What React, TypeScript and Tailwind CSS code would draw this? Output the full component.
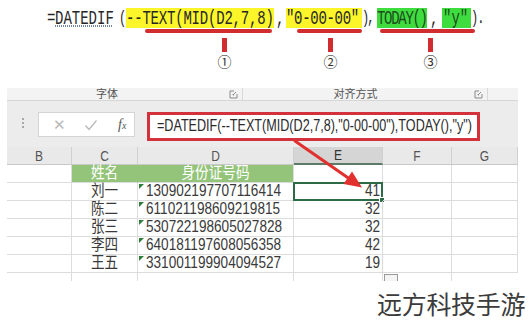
import React from "react";

type Person = { name: string; id: string; age: number };

const people: Person[] = [
  { name: "刘一", id: "130902197707116414", age: 41 },
  { name: "陈二", id: "611021198609219815", age: 32 },
  { name: "张三", id: "530722198605027828", age: 32 },
  { name: "李四", id: "640181197608056358", age: 42 },
  { name: "王五", id: "331001199904094527", age: 19 },
];

// one piece of the big formula at the top
function Seg({ w, bg = "", children }: { w: string; bg?: string; children: React.ReactNode }) {
  return (
    <span className={`flex h-[20px] shrink-0 items-center ${w} ${bg}`}>
      <span className="inline-block scale-y-[1.5] whitespace-nowrap leading-[13px]">{children}</span>
    </span>
  );
}

function TopFormula() {
  return (
    <div className="h-[88px] pt-[8px] font-['Liberation_Mono','Noto_Sans_CJK_SC',monospace] text-[14px] text-[#262626]">
      <div className="flex pl-[47px]">
        <Seg w="w-[8px]">=</Seg>
        <Seg w="w-[64px]">
          <span className="underline decoration-dotted decoration-[#7488aa] underline-offset-[1px]">DATEDIF</span>
        </Seg>
        <Seg w="w-[7px]">
          <span className="text-[12px]">(</span>
        </Seg>
        <Seg w="w-[148px]" bg="bg-[#fbf52a]">
          <span className="tracking-[-0.2px]">--TEXT(MID(D2,7,8)</span>
        </Seg>
        <Seg w="w-[12px]">
          <span className="pl-[2px]">,</span>
        </Seg>
        <Seg w="w-[76px]" bg="bg-[#fbf52a]">
          <span className="tracking-[-0.3px]">″0-00-00″</span>
        </Seg>
        <Seg w="w-[15px]">
          <span className="text-[12px] tracking-[-2px]">),</span>
        </Seg>
        <Seg w="w-[50px]" bg="bg-[#3fdc3f]">
          <span className="tracking-[-1.3px] text-[#1d4d1d]">TODAY()</span>
        </Seg>
        <Seg w="w-[15px]">
          <span className="pl-[3px]">,</span>
        </Seg>
        <Seg w="w-[29px]" bg="bg-[#3fdc3f]">
          <span className="pl-[1px] text-[#1d4d1d]">″y″</span>
        </Seg>
        <Seg w="w-[16px]">
          <span className="text-[12px] tracking-[-1px]">).</span>
        </Seg>
      </div>
      <div className="mt-[1px] flex h-[4px]">
        <span className="ml-[145px] w-[127px] rounded-full bg-[#d12c2f]" />
        <span className="ml-[25px] w-[65px] rounded-full bg-[#d12c2f]" />
        <span className="ml-[18px] w-[95px] rounded-full bg-[#d12c2f]" />
      </div>
      <div className="mt-[5px] flex h-[14px]">
        <span className="ml-[222px] w-[5px] bg-[#d12c2f]" />
        <span className="ml-[101px] w-[5px] bg-[#d12c2f]" />
        <span className="ml-[95px] w-[5px] bg-[#d12c2f]" />
      </div>
      <div className="mt-[1px] flex font-['Noto_Sans_CJK_SC','DejaVu_Sans',sans-serif] text-[14px] leading-[16px] text-[#333]">
        <span className="ml-[216px] w-[17px] text-center">①</span>
        <span className="ml-[89px] w-[17px] text-center">②</span>
        <span className="ml-[83px] w-[17px] text-center">③</span>
      </div>
    </div>
  );
}

function Launcher() {
  return (
    <svg width="9" height="9" viewBox="0 0 9 9" className="text-[#8a8a8a]">
      <path d="M1 1h4M1 1v7h7V4" fill="none" stroke="currentColor" strokeWidth="1" />
      <path d="M4 5l3-3M5 5h-1v-1" fill="none" stroke="currentColor" strokeWidth="1" />
    </svg>
  );
}

function Ribbon() {
  return (
    <div className="ml-[7px] flex h-[13px] w-[511px] items-center border-b border-[#d6d6d6] bg-[#f3f3f3] text-[11px] text-[#555]">
      <span className="w-[200px] text-center">字体</span>
      <span className="ml-[22px] flex h-full items-center gap-[3px] border-r border-[#d8d8d8] pr-[4px]">
        <Launcher />
      </span>
      <span className="w-[225px] text-center">对齐方式</span>
      <span className="ml-[6px] flex h-full items-center border-r border-[#d8d8d8] pr-[4px]">
        <Launcher />
      </span>
    </div>
  );
}

function FormulaBar() {
  return (
    <div className="ml-[7px] flex h-[46px] w-[511px] bg-[#ececec] pt-[11px]">
      <div className="flex w-[31px] flex-col items-center gap-[2px] pt-[6px]">
        <span className="h-[2px] w-[2px] bg-[#a8a8a8]" />
        <span className="h-[2px] w-[2px] bg-[#a8a8a8]" />
        <span className="h-[2px] w-[2px] bg-[#a8a8a8]" />
      </div>
      <div className="flex h-[25px] w-[97px] items-center border border-[#d4d4d4] bg-white">
        <span className="ml-[14px] text-[15px] leading-none text-[#b8b8b8]">✕</span>
        <svg width="14" height="12" viewBox="0 0 14 12" className="ml-[18px]">
          <path d="M1.5 6.5l3.5 4L12.5 1.5" fill="none" stroke="#b9b9b9" strokeWidth="1.3" />
        </svg>
        <span className="ml-[20px] font-['Liberation_Serif',serif] text-[14px] italic text-[#555]">
          f<span className="text-[10px]">x</span>
        </span>
      </div>
      <div className="ml-[12px] flex h-[29px] w-[333px] items-center border-[3px] border-[#d3323c] bg-white pl-[7px]">
        <span className="inline-block origin-left scale-y-[1.3] whitespace-nowrap text-[12.6px] text-[#2a2a2a]">
          =DATEDIF(--TEXT(MID(D2,7,8),"0-00-00"),TODAY(),"y")
        </span>
      </div>
    </div>
  );
}

function ColHead({ label, active = false }: { label: string; active?: boolean }) {
  return (
    <div
      className={`flex h-[18px] items-center justify-center border-r border-[#d0d0d0] text-[12px] ${
        active ? "border-b-2 border-b-[#5d7a66] bg-[#d5d5d5] text-[#333]" : "border-b border-b-[#c8c8c8] bg-[#e9e9e9] text-[#555]"
      }`}
    >
      <span className="inline-block scale-y-[1.15]">{label}</span>
    </div>
  );
}

function Cell({ children, className = "" }: { children?: React.ReactNode; className?: string }) {
  return <div className={`relative flex h-[18px] items-center border-r border-b ${className}`}>{children}</div>;
}

function Txt({ children }: { children: React.ReactNode }) {
  return <span className="inline-block scale-y-[1.2] whitespace-nowrap">{children}</span>;
}

function Sheet() {
  return (
    <div className="ml-[7px] grid w-[511px] grid-cols-[65px_66px_156px_89px_69px_66px] text-[13.6px] text-[#3a3a3a]">
      <ColHead label="B" />
      <ColHead label="C" />
      <ColHead label="D" />
      <ColHead label="E" active />
      <ColHead label="F" />
      <ColHead label="G" />

      <Cell className="border-[#dcdcdc]" />
      <Cell className="justify-center border-b-[#dcdcdc] border-r-[#94c47a] bg-[#94c47a] text-white">
        <Txt>姓名</Txt>
      </Cell>
      <Cell className="justify-center border-[#dcdcdc] bg-[#94c47a] text-white">
        <Txt>身份证号码</Txt>
      </Cell>
      <Cell className="border-[#dcdcdc]" />
      <Cell className="border-[#dcdcdc]" />
      <Cell className="border-[#dcdcdc]" />

      {people.map((p, i) => (
        <React.Fragment key={p.id}>
          <Cell className="border-[#dcdcdc]" />
          <Cell className="justify-center border-[#dcdcdc]">
            <Txt>{p.name}</Txt>
          </Cell>
          <Cell className="border-[#dcdcdc] pl-[8px]">
            <span className="absolute left-[1px] top-[1px] h-0 w-0 border-t-[5px] border-r-[5px] border-t-[#2f7d3a] border-r-transparent" />
            <Txt>{p.id}</Txt>
          </Cell>
          {i === 0 ? (
            <div className="relative -mt-px -ml-px flex h-[19px] items-center justify-end border-2 border-[#2c6b45] pr-[1px]">
              <Txt>{p.age}</Txt>
              <span className="absolute -bottom-[4px] -right-[4px] h-[6px] w-[6px] border border-white bg-[#2c6b45]" />
            </div>
          ) : (
            <Cell className="justify-end border-[#dcdcdc] pr-[2px]">
              <Txt>{p.age}</Txt>
            </Cell>
          )}
          <Cell className="border-[#dcdcdc]" />
          <Cell className="border-[#dcdcdc]" />
        </React.Fragment>
      ))}

      <div className="h-[8px] border-r border-[#dcdcdc]" />
      <div className="h-[8px] border-r border-[#dcdcdc]" />
      <div className="h-[8px] border-r border-[#dcdcdc]" />
      <div className="relative h-[8px] border-r border-[#dcdcdc]">
        <span className="absolute -right-[16px] top-[1px] h-[7px] w-[14px] border border-b-0 border-[#9a9a9a] bg-[#f4f4f4]" />
      </div>
      <div className="h-[8px] border-r border-[#dcdcdc]" />
      <div className="h-[8px]" />
    </div>
  );
}

function Arrow() {
  return (
    <svg className="pointer-events-none absolute left-0 top-0" width="531" height="323" viewBox="0 0 531 323">
      <line x1="295" y1="141" x2="349" y2="178.5" stroke="#e2302f" strokeWidth="3" strokeLinecap="round" />
      <polygon points="362,187.5 343.5,184 352,171.5" fill="#e2302f" />
    </svg>
  );
}

export default function App() {
  return (
    <div className="relative h-[323px] w-[531px] overflow-hidden bg-white font-['Liberation_Sans','Noto_Sans_CJK_SC',sans-serif]">
      <TopFormula />
      <Ribbon />
      <FormulaBar />
      <Sheet />
      <Arrow />
      <div className="absolute left-[377px] top-[287px] font-['Noto_Sans_CJK_SC',sans-serif] text-[25px] leading-[32px] tracking-[-0.3px] text-[#3b3b3b] [text-shadow:0_0_3px_#fff]">
        远方科技手游
      </div>
    </div>
  );
}
